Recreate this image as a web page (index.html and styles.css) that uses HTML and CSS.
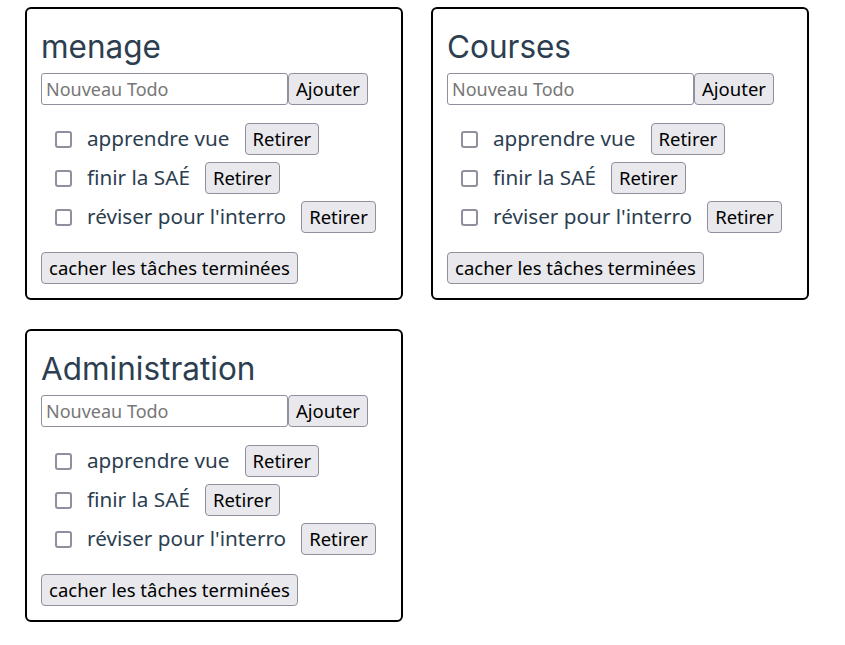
FILE: index.html
```html
<!DOCTYPE html>
<html lang="fr">
<head>
<meta charset="utf-8">
<title>Todos</title>
<link rel="stylesheet" href="styles.css">
</head>
<body>
<div class="board">
  <section class="card">
    <h2 class="title">menage</h2>
    <div class="add-row">
      <input class="new-input" type="text" placeholder="Nouveau Todo">
      <button class="btn">Ajouter</button>
    </div>
    <ul class="todos">
      <li class="todo"><span class="check"></span><span class="label">apprendre vue</span><button class="btn">Retirer</button></li>
      <li class="todo"><span class="check"></span><span class="label">finir la SAÉ</span><button class="btn">Retirer</button></li>
      <li class="todo"><span class="check"></span><span class="label">réviser pour l'interro</span><button class="btn">Retirer</button></li>
    </ul>
    <button class="btn">cacher les tâches terminées</button>
  </section>
  <section class="card">
    <h2 class="title">Courses</h2>
    <div class="add-row">
      <input class="new-input" type="text" placeholder="Nouveau Todo">
      <button class="btn">Ajouter</button>
    </div>
    <ul class="todos">
      <li class="todo"><span class="check"></span><span class="label">apprendre vue</span><button class="btn">Retirer</button></li>
      <li class="todo"><span class="check"></span><span class="label">finir la SAÉ</span><button class="btn">Retirer</button></li>
      <li class="todo"><span class="check"></span><span class="label">réviser pour l'interro</span><button class="btn">Retirer</button></li>
    </ul>
    <button class="btn">cacher les tâches terminées</button>
  </section>
  <section class="card">
    <h2 class="title">Administration</h2>
    <div class="add-row">
      <input class="new-input" type="text" placeholder="Nouveau Todo">
      <button class="btn">Ajouter</button>
    </div>
    <ul class="todos">
      <li class="todo"><span class="check"></span><span class="label">apprendre vue</span><button class="btn">Retirer</button></li>
      <li class="todo"><span class="check"></span><span class="label">finir la SAÉ</span><button class="btn">Retirer</button></li>
      <li class="todo"><span class="check"></span><span class="label">réviser pour l'interro</span><button class="btn">Retirer</button></li>
    </ul>
    <button class="btn">cacher les tâches terminées</button>
  </section>
</div>
</body>
</html>
```
FILE: styles.css
```css
* { box-sizing: border-box; }
html, body { margin: 0; padding: 0; background: #fff; }
body { font-family: "Noto Sans", sans-serif; color: #2c3e50; }

.board {
  display: grid;
  grid-template-columns: 378px 378px;
  column-gap: 28px;
  row-gap: 29px;
  padding: 7px 0 0 25px;
  align-items: start;
}

.card {
  border: 2px solid #000;
  border-radius: 6px;
  padding: 20px 14px 14px 14px;
  display: flex;
  flex-direction: column;
  align-items: flex-start;
}

.title {
  font-family: Inter, sans-serif;
  font-weight: 400;
  font-size: 31.5px;
  line-height: 36px;
  margin: 0 0 8px 0;
  color: #2c3e50;
}

.add-row { display: flex; align-items: stretch; }

.new-input {
  width: 247px;
  height: 32px;
  border: 1px solid #8f8f9d;
  border-radius: 3px;
  padding: 0 4px;
  font-family: "Noto Sans", sans-serif;
  font-size: 18px;
  color: #000;
  margin: 0;
  outline: none;
}
.new-input::placeholder { color: #777; }

.btn {
  font-family: "Noto Sans", sans-serif;
  font-size: 18.5px;
  color: #000;
  background: #e9e9ed;
  border: 1px solid #8f8f9d;
  border-radius: 4px;
  height: 32px;
  padding: 0 7px;
  margin: 0;
  line-height: 1;
}

.todos {
  list-style: none;
  margin: 18px 0 19px 0;
  padding: 0 0 0 14px;
  display: flex;
  flex-direction: column;
  gap: 7px;
}

.todo { display: flex; align-items: center; height: 32px; }

.check {
  width: 17px;
  height: 17px;
  border: 2px solid #8f8f9d;
  border-radius: 3px;
  background: #fff;
  margin-right: 15px;
  flex: none;
}

.label {
  font-size: 20.7px;
  margin-right: 15px;
  position: relative;
  top: -1px;
}
```
